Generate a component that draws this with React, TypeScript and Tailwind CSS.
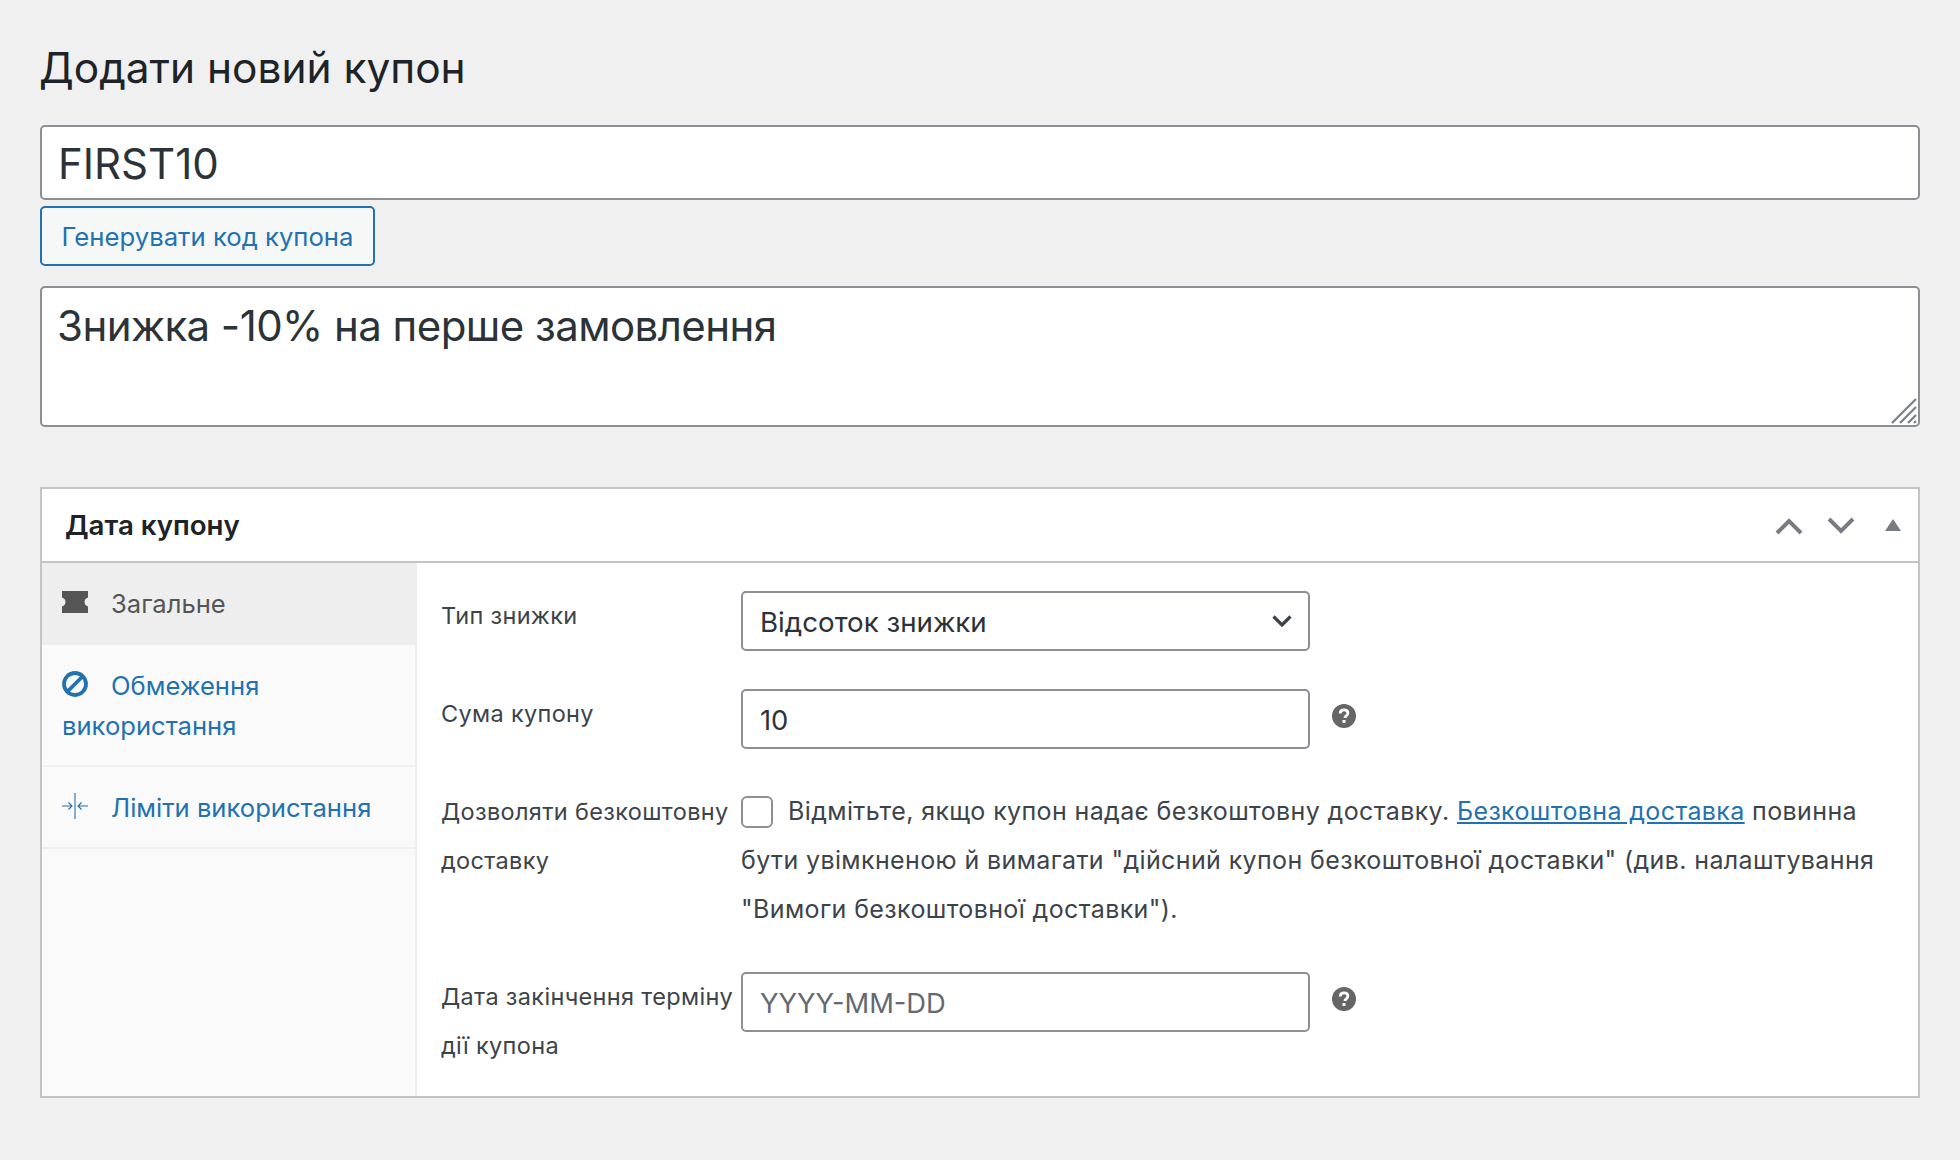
function HelpTip() {
  return (
    <svg viewBox="0 0 24 24" className="h-6 w-6 shrink-0" aria-hidden="true">
      <circle cx="12" cy="12" r="12" fill="#666666" />
      <path d="M8.2 9.6c0-2.4 1.6-3.7 3.9-3.7 2.3 0 3.8 1.3 3.800 3.200 0 1.500-.8 2.200-1.800 2.900-.9.600-1.200 1-1.200 2" fill="none" stroke="#ffffff" strokeWidth="2.8" />
      <rect x="10.5" y="16" width="3" height="3" fill="#ffffff" />
    </svg>
  )
}

function FieldLabel({ children }: { children: React.ReactNode }) {
  return <div className="w-[300px] shrink-0 text-[23.5px] leading-[49px] tracking-[0.33px] text-[#3c434a]">{children}</div>
}

const fieldClass =
  'h-[60px] w-[569px] rounded-[5px] border-[2.5px] border-[#8c8f94] bg-white px-[17px] pt-[2px] text-[27.3px] text-[#2c3338] outline-none'

export default function App() {
  return (
    <div className="min-h-[1160px] bg-[#f0f0f1] px-10 pt-[38px] font-['Inter','Liberation_Sans',sans-serif]">
      <h1 className="-ml-px text-[42.4px] leading-[60px] font-normal text-[#1d2327]">Додати новий купон</h1>

      <input
        className="mt-[27px] block h-[75px] w-full rounded-[5px] border-[2.5px] border-[#8c8f94] bg-white px-[16px] pt-[2px] text-[42px] text-[#2c3338] outline-none"
        defaultValue="FIRST10"
      />
      <button className="mt-[6px] block h-[60px] w-[335px] rounded-[5px] border-[2.5px] border-[#2271b1] bg-[#f6f7f7] pt-[2px] text-[25.7px] text-[#2271b1]">
        Генерувати код купона
      </button>

      <div className="relative mt-[20px] h-[141px]">
        <textarea
          className="block h-full w-full resize-none rounded-[5px] border-[2.5px] border-[#8c8f94] bg-white px-[15px] py-[9px] text-[42px] leading-[58px] tracking-[-0.56px] text-[#2c3338] outline-none"
          defaultValue="Знижка -10% на перше замовлення"
        />
        <svg viewBox="0 0 26 26" className="absolute right-[3px] bottom-[3px] h-[26px] w-[26px]" aria-hidden="true">
          <path d="M1 25 25 1M9 25 25 9M17 25 25 17M23 25l2-2" stroke="#7f8388" strokeWidth="2.4" fill="none" />
        </svg>
      </div>

      <section className="mt-[60px] border-[2.5px] border-[#c3c4c7] bg-white">
        <header className="flex h-[74px] items-center justify-between border-b-[2.5px] border-[#c3c4c7] pl-[23px] pr-[17px]">
          <h2 className="pt-[2px] text-[27.7px] font-semibold text-[#1d2327]">Дата купону</h2>
          <div className="flex items-center gap-[24px] pt-[2px]">
            <svg viewBox="0 0 28 18" className="h-[18px] w-[28px]" aria-hidden="true">
              <path d="M2 16 14 4l12 12" fill="none" stroke="#787c82" strokeWidth="4" />
            </svg>
            <svg viewBox="0 0 28 18" className="h-[18px] w-[28px]" aria-hidden="true">
              <path d="M2 2l12 12L26 2" fill="none" stroke="#787c82" strokeWidth="4" />
            </svg>
            <svg viewBox="0 0 16 12" className="ml-[6px] -mt-[2px] h-[12px] w-[16px]" aria-hidden="true">
              <path d="M8 0l8 12H0z" fill="#787c82" />
            </svg>
          </div>
        </header>

        <div className="flex h-[533px]">
          <nav className="w-[375px] shrink-0 border-r-[2px] border-[#eeeeee] bg-[#fafafa] text-[25.6px] leading-[40px]">
            <div className="flex h-[82px] items-center gap-[23px] bg-[#eeeeee] pl-[20px] text-[#555555]">
              <svg viewBox="0 0 26 22" className="-mt-[4px] h-[22px] w-[26px]" aria-hidden="true">
                <path d="M0 0h26v6.500c-2 .6-3.500 2.200-3.500 4.500s1.500 3.900 3.500 4.500V22H0v-6.500c2-.6 3.500-2.200 3.500-4.500S2 7.100 0 6.500z" fill="#555555" />
              </svg>
              Загальне
            </div>
            <div className="h-[122px] border-b-[2px] border-[#f0f0f1] pt-[21px] pl-[20px] text-[#2271b1]">
              <div className="flex items-center gap-[23px]">
                <svg viewBox="0 0 26 26" className="-mt-[4px] h-[26px] w-[26px]" aria-hidden="true">
                  <circle cx="13" cy="13" r="11" fill="none" stroke="#2271b1" strokeWidth="3.800" />
                  <path d="M6 20 20 6" stroke="#2271b1" strokeWidth="3.800" />
                </svg>
                Обмеження
              </div>
              <div>використання</div>
            </div>
            <div className="flex h-[82px] items-center gap-[23px] border-b-[2px] border-[#f0f0f1] pt-[2px] pl-[20px] text-[#2271b1]">
              <svg viewBox="0 0 26 26" className="-mt-[4px] h-[26px] w-[26px]" fill="none" stroke="#2271b1" strokeWidth="1.100" aria-hidden="true">
                <path d="M13 0v26M0 13h10M6.500 9.500 10 13l-3.500 3.500M26 13H16M19.500 9.500 16 13l3.500 3.500" />
              </svg>
              Ліміти використання
            </div>
          </nav>

          <div className="flex-1 pl-[24px] pt-[28px]">
            <div className="flex h-[98px]">
              <FieldLabel>Тип знижки</FieldLabel>
              <div className="relative h-[60px]">
                <select className={`${fieldClass} appearance-none pt-[4px] text-[27.7px]`} defaultValue="percent">
                  <option value="percent">Відсоток знижки</option>
                </select>
                <svg viewBox="0 0 20 13" className="pointer-events-none absolute top-[24px] right-[18px] h-[13px] w-[20px]" aria-hidden="true">
                  <path d="M1.500 1.500 10 10l8.500-8.500" fill="none" stroke="#3c434a" strokeWidth="3.200" />
                </svg>
              </div>
            </div>
            <div className="flex h-[98px]">
              <FieldLabel>Сума купону</FieldLabel>
              <input className={fieldClass} defaultValue="10" />
              <div className="ml-[22px] pt-[15px]">
                <HelpTip />
              </div>
            </div>
            <div className="flex h-[185px]">
              <FieldLabel>
                Дозволяти безкоштовну доставку
              </FieldLabel>
              <p className="w-[1150px] shrink-0 text-[25px] leading-[49px] tracking-[0.38px] text-[#3c434a]">
                <span className="mr-[15px] inline-block h-[32px] w-[32px] rounded-[6px] border-[2.5px] border-[#8c8f94] bg-white align-[-8px]" />
                Відмітьте, якщо купон надає безкоштовну доставку.{' '}
                <a href="#" className="text-[#2271b1] underline">Безкоштовна доставка</a>{' '}
                повинна бути увімкненою й вимагати "дійсний купон безкоштовної доставки" (див. налаштування "Вимоги безкоштовної доставки").
              </p>
            </div>
            <div className="flex">
              <FieldLabel>Дата закінчення терміну дії купона</FieldLabel>
              <input className={`${fieldClass} placeholder:text-[#646970]`} placeholder="YYYY-MM-DD" />
              <div className="ml-[22px] pt-[15px]">
                <HelpTip />
              </div>
            </div>
          </div>
        </div>
      </section>
    </div>
  )
}
